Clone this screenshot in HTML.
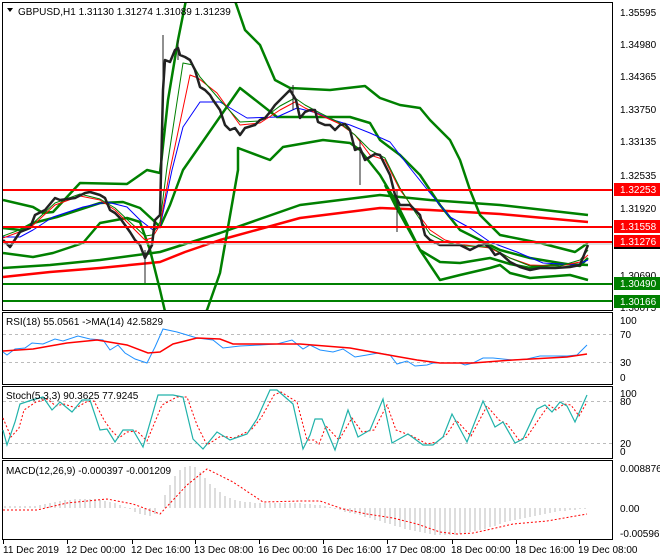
<!DOCTYPE html>
<html><head><meta charset="utf-8"><style>
html,body{margin:0;padding:0;background:#fff;}
svg{display:block;font-family:"Liberation Sans",sans-serif;}
</style></head><body>
<svg width="660" height="560" viewBox="0 0 660 560" xmlns="http://www.w3.org/2000/svg">
<rect width="660" height="560" fill="#fff"/>
<g fill="none" stroke="#000" stroke-width="1">
<rect x="2.5" y="2.5" width="610" height="308"/>
<rect x="2.5" y="312.5" width="610" height="72"/>
<rect x="2.5" y="386.5" width="610" height="72"/>
<rect x="2.5" y="460.5" width="610" height="79"/>
</g>
<defs><clipPath id="m"><rect x="3" y="3" width="609" height="307"/></clipPath></defs>
<g clip-path="url(#m)" fill="none" stroke-linejoin="round">
<!-- 200 MAs -->
<polyline stroke="#008000" stroke-width="2.5" points="3,268 50,265 100,260 160,252 220,233 300,205 380,195 430,200 500,205 588,215"/>
<polyline stroke="#f00" stroke-width="2.5" points="3,277 50,272 100,268 160,262 185,252 220,240 300,218 380,208 430,210 500,214 588,222"/>
<!-- bands -->
<polyline stroke="#008000" stroke-width="2.5" points="3,200 33,207 43,213 53,212 80,183 127,184 147,170 160,173 168,100 178,40 187,-5 233,-5 245,30 260,45 275,80 290,88 330,90 365,86 380,98 400,105 420,108 430,120 450,140 460,160 470,190 480,215 500,235 540,243 575,252 588,243"/>
<polyline stroke="#008000" stroke-width="2.5" points="3,228 20,230 33,223 57,217 100,203 123,202 140,208 153,220 160,227 170,205 183,170 240,88 277,117 350,117 370,123 380,140 400,155 420,175 440,205 460,230 480,240 500,250 530,258 560,263 580,266 588,258"/>
<polyline stroke="#008000" stroke-width="2.5" points="3,253 33,257 53,253 83,243 100,223 127,218 140,222 150,250 160,290 167,320 200,320 207,310 220,273 238,170 238,148 270,160 283,147 323,140 350,143 360,150 380,175 395,200 410,230 420,250 440,262 460,263 490,258 510,264 530,268 560,264 588,265"/>
<polyline stroke="#008000" stroke-width="2.5" points="385,185 395,205 420,250 440,280 460,275 490,268 500,265 510,273 530,278 570,275 588,280"/>
<!-- small MAs -->
<polyline stroke="#00f" stroke-width="1" points="3,237 20,237 33,230 53,217 83,207 107,202 127,207 140,220 153,230 160,227 172,170 183,127 200,102 220,102 247,118 277,117 297,108 317,113 330,119 350,125 370,133 390,142 410,168 430,193 450,217 470,228 490,242 517,252 543,263 577,265 588,260"/>
<polyline stroke="#f00" stroke-width="1" points="3,238 30,228 55,205 80,196 100,200 115,210 130,225 145,240 152,238 160,225 170,170 190,75 198,78 217,93 240,125 260,123 280,110 295,102 305,108 320,115 340,124 355,135 370,155 385,160 400,190 415,210 430,230 445,240 465,245 490,248 510,258 530,265 560,266 580,262 588,255"/>
<polyline stroke="#008000" stroke-width="1" points="3,236 30,226 55,203 80,194 100,199 115,208 130,222 145,236 152,235 160,222 167,167 183,63 193,65 200,77 220,100 240,122 260,121 280,106 295,98 305,105 320,113 340,123 355,135 370,150 385,158 400,188 415,212 430,234 445,242 465,246 490,247 510,258 530,266 560,266 580,260 588,250"/>
<!-- price -->
<polyline stroke="#222" stroke-width="2.5" points="3,240 10,247 20,232 30,228 35,215 45,210 55,198 60,200 75,198 85,193 90,192 100,195 105,198 110,210 115,213 120,218 125,225 130,232 135,240 140,245 145,258 152,245 155,220 160,215 163,90 165,60 170,62 175,50 178,48 180,55 185,57 190,60 195,70 200,87 205,90 210,95 213,100 220,110 225,125 230,130 235,128 240,135 245,128 255,125 260,120 265,118 270,112 275,105 280,100 285,95 290,90 293,95 296,100 300,118 305,112 310,110 315,110 318,122 325,125 330,125 335,130 340,125 345,124 350,130 355,150 360,148 365,160 370,157 375,154 380,155 385,165 390,175 395,195 400,205 410,205 415,210 420,215 425,235 430,240 440,245 460,245 470,250 480,245 485,244 490,248 495,255 500,253 510,262 520,267 530,270 540,268 555,268 570,267 580,265 584,255 588,245"/>
<g stroke="#222" stroke-width="1"><line x1="163" x2="163" y1="35" y2="130"/><line x1="145" x2="145" y1="250" y2="284"/><line x1="178" x2="178" y1="40" y2="60"/><line x1="360" x2="360" y1="140" y2="185"/><line x1="397" x2="397" y1="190" y2="232"/><line x1="293" x2="293" y1="85" y2="110"/></g>
<!-- horizontal levels -->
<line x1="3" x2="612" y1="190" y2="190" stroke="#f00" stroke-width="2"/>
<line x1="3" x2="612" y1="227" y2="227" stroke="#f00" stroke-width="2"/>
<line x1="3" x2="612" y1="244" y2="244" stroke="#c0c0c0" stroke-width="1"/>
<line x1="3" x2="612" y1="242" y2="242" stroke="#f00" stroke-width="2"/>
<line x1="3" x2="612" y1="284" y2="284" stroke="#008000" stroke-width="2"/>
<line x1="3" x2="612" y1="301" y2="301" stroke="#008000" stroke-width="2"/>
</g>
<path d="M7 8 L13 8 L10 12 Z" fill="#000"/>
<text x="18" y="15" font-size="10">GBPUSD,H1  1.31130 1.31274 1.31089 1.31239</text>
<g font-size="10" fill="#000">
<text x="620" y="16">1.35595</text><text x="620" y="48">1.34980</text><text x="620" y="80">1.34365</text>
<text x="620" y="113">1.33750</text><text x="620" y="145">1.33135</text><text x="620" y="179">1.32535</text>
<text x="620" y="212">1.31920</text><text x="620" y="279">1.30690</text><text x="620" y="311">1.30075</text>
</g>
<g font-size="10" fill="#fff">
<rect x="614" y="183" width="46" height="13" fill="#f00"/><text x="620" y="193">1.32253</text>
<rect x="614" y="220" width="46" height="13" fill="#f00"/><text x="620" y="230">1.31558</text>
<rect x="614" y="235" width="46" height="13" fill="#f00"/><text x="620" y="245">1.31276</text>
<rect x="614" y="247" width="46" height="2" fill="#000"/>
<rect x="614" y="277" width="46" height="13" fill="#008000"/><text x="620" y="287">1.30490</text>
<rect x="614" y="295" width="46" height="13" fill="#008000"/><text x="620" y="305">1.30166</text>
</g>
<!-- level lines -->
<g stroke="#bbb" stroke-dasharray="3,3"><line x1="3" x2="612" y1="334.5" y2="334.5"/><line x1="3" x2="612" y1="362.5" y2="362.5"/>
<line x1="3" x2="612" y1="401.5" y2="401.5"/><line x1="3" x2="612" y1="443.5" y2="443.5"/></g>
<!-- RSI -->
<polyline fill="none" stroke="#1e90ff" stroke-width="1" points="3,352 7,355 15,349 25,348 32,343 43,344 55,339 63,341 78,336 90,339 103,340 110,350 118,345 125,353 135,359 147,363 155,347 163,329 177,332 197,338 213,340 223,348 240,346 260,345 277,344 292,340 303,349 310,345 320,350 333,352 343,349 355,357 367,355 378,353 390,355 397,364 407,361 415,366 427,365 433,363 460,363 465,365 473,363 483,358 493,358 513,360 527,359 540,356 567,356 577,355 587,345"/>
<polyline fill="none" stroke="#f00" stroke-width="1.5" points="3,351 33,349 67,343 97,340 127,345 148,353 160,352 173,344 197,338 220,339 233,344 300,344 350,348 383,354 417,360 440,363 473,363 513,360 567,357 587,354"/>
<g font-size="10"><text x="6" y="325">RSI(18) 55.0561  -&gt;MA(14) 42.5829</text>
<text x="620" y="324">100</text><text x="620" y="338">70</text><text x="620" y="366">30</text><text x="620" y="381">0</text></g>
<!-- Stoch -->
<polyline fill="none" stroke="#f00" stroke-width="1" stroke-dasharray="2,2" points="3,418 11,437 19,428 24,410 36,402 47,399 56,406 64,404 76,408 86,402 94,401 104,420 111,430 119,438 127,432 137,431 147,441 162,405 177,397 187,397 197,425 207,445 221,436 234,438 251,430 261,418 274,395 281,392 297,402 307,440 314,440 319,444 326,426 339,440 352,418 362,432 374,430 387,405 396,430 412,436 427,444 437,442 447,434 456,420 471,436 487,406 499,420 507,424 519,440 527,437 541,416 549,405 556,410 564,404 571,405 579,416 587,402"/>
<polyline fill="none" stroke="#20b2aa" stroke-width="1.2" points="3,430 7,445 15,422 20,404 32,400 43,397 52,410 60,402 72,412 82,400 90,400 100,430 107,429 115,442 123,430 133,430 143,447 158,395 173,395 183,397 193,439 203,449 217,432 230,440 247,434 257,419 270,390 277,390 293,404 303,449 310,435 315,419 322,419 335,450 348,410 358,437 370,430 383,399 392,443 408,434 423,445 433,445 443,437 452,414 467,442 483,401 495,427 503,422 515,443 523,439 537,409 545,405 552,412 560,402 567,406 575,422 587,395"/>
<g font-size="10"><text x="6" y="399">Stoch(5,3,3) 90.3625 77.9245</text>
<text x="620" y="397">100</text><text x="620" y="405">80</text><text x="620" y="447">20</text><text x="620" y="455">0</text></g>
<!-- MACD histogram -->
<path stroke="#bbb" stroke-width="1" fill="none" d="M5 508V506M10 508V506M15 508V506M20 508V506M25 508V506M30 508V506M35 508V506M40 508V505M45 508V504M50 508V503M55 508V502M60 508V501M65 508V500M70 508V500M75 508V499M80 508V499M85 508V499M90 508V499M95 508V499M100 508V500M105 508V501M110 508V502M115 508V503M120 508V505M125 508V507M130 508V509M135 508V512M140 508V514M145 508V515M150 508V516M155 508V514M160 508V508M165 508V495M170 508V485M175 508V476M180 508V470M185 508V467M190 508V466M195 508V467M200 508V472M205 508V478M210 508V484M215 508V488M220 508V492M225 508V496M230 508V498M235 508V500M240 508V501M245 508V502M250 508V502M255 508V503M260 508V503M265 508V503M270 508V503M275 508V503M280 508V503M285 508V503M290 508V503M295 508V503M300 508V503M305 508V504M310 508V504M315 508V505M320 508V505M325 508V506M330 508V507M335 508V509M340 508V510M345 508V512M350 508V513M355 508V514M360 508V515M365 508V517M370 508V518M375 508V520M380 508V521M385 508V523M390 508V524M395 508V526M400 508V527M405 508V529M410 508V530M415 508V531M420 508V532M425 508V533M430 508V534M435 508V535M440 508V535M445 508V535M450 508V535M455 508V535M460 508V534M465 508V533M470 508V532M475 508V531M480 508V530M485 508V529M490 508V527M495 508V526M500 508V524M505 508V522M510 508V521M515 508V520M520 508V519M525 508V518M530 508V517M535 508V516M540 508V515M545 508V514M550 508V513M555 508V512M560 508V511M565 508V511M570 508V510M575 508V510M580 508V509M585 508V509"/>
<polyline fill="none" stroke="#f00" stroke-width="1" stroke-dasharray="2,2" points="3,510 37,510 67,503 107,499 133,504 160,514 187,485 207,469 233,482 263,502 300,501 320,501 343,509 367,514 393,518 417,524 440,532 457,534 473,533 487,530 513,524 547,521 587,514"/>
<g font-size="10"><text x="6" y="474">MACD(12,26,9) -0.000397 -0.001209</text>
<text x="620" y="472">0.008876</text><text x="620" y="512">0.00</text><text x="620" y="537">-0.005966</text></g>
<!-- time axis -->
<g stroke="#000"><line x1="3.5" x2="3.5" y1="540" y2="544"/><line x1="67.5" x2="67.5" y1="540" y2="544"/><line x1="132.5" x2="132.5" y1="540" y2="544"/><line x1="195.5" x2="195.5" y1="540" y2="544"/><line x1="259.5" x2="259.5" y1="540" y2="544"/><line x1="323.5" x2="323.5" y1="540" y2="544"/><line x1="387.5" x2="387.5" y1="540" y2="544"/><line x1="452.5" x2="452.5" y1="540" y2="544"/><line x1="516.5" x2="516.5" y1="540" y2="544"/><line x1="579.5" x2="579.5" y1="540" y2="544"/></g>
<g font-size="10"><text x="3" y="553">11 Dec 2019</text><text x="66" y="553">12 Dec 00:00</text><text x="131" y="553">12 Dec 16:00</text><text x="194" y="553">13 Dec 08:00</text><text x="258" y="553">16 Dec 00:00</text><text x="322" y="553">16 Dec 16:00</text><text x="386" y="553">17 Dec 08:00</text><text x="451" y="553">18 Dec 00:00</text><text x="515" y="553">18 Dec 16:00</text><text x="578" y="553">19 Dec 08:00</text></g>
</svg>
</body></html>
